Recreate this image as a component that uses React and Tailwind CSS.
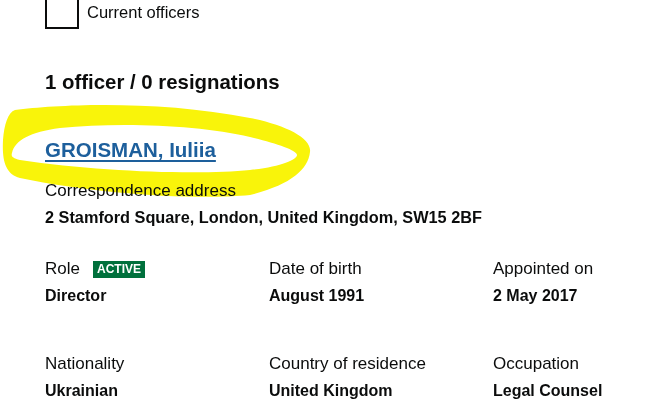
import React from 'react';

const Field = ({ label, value, badge }) => (
  <div>
    <div className="flex items-center gap-[13px] text-[17px] leading-[20px] text-[#0b0c0c]">
      <span>{label}</span>
      {badge && (
        <span className="bg-[#00703c] px-[4px] text-[12px] leading-[17px] font-bold text-white">
          {badge}
        </span>
      )}
    </div>
    <div className="mt-[7px] text-[16px] leading-[20px] font-bold text-[#0b0c0c]">{value}</div>
  </div>
);

const Scribble = () => (
  <svg
    className="pointer-events-none absolute left-0 top-0 mix-blend-multiply"
    width="330"
    height="210"
    viewBox="0 0 330 210"
  >
    <path
      fillRule="evenodd"
      fill="#f9f40a"
      d="M15,110 C60,104 160,100 250,118 C285,125 312,138 310,152 C308,170 290,185 250,195 C200,200 100,195 20,178 C5,174 2,160 3,140 C4,125 8,112 15,110 Z
         M12,153 C15,140 30,132 60,128 C120,122 200,125 250,137 C275,143 297,150 297,155 C297,160 280,167 250,170 C200,175 100,172 20,160 C12,158 11,156 12,153 Z"
    />
  </svg>
);

export default function App() {
  return (
    <div
      className="relative h-[400px] w-[670px] overflow-hidden bg-white pl-[45px] text-[#0b0c0c]"
      style={{ fontFamily: '"Liberation Sans", Arial, sans-serif' }}
    >
      {/* checkbox filter */}
      <div className="-mt-[5px] flex items-start gap-[8px]">
        <div className="h-[34px] w-[34px] border-2 border-[#0b0c0c]" />
        <span className="mt-[7px] text-[16.5px] leading-[20px]">Current officers</span>
      </div>

      <h2 className="mt-[41px] text-[20.4px] leading-[24px] font-bold">1 officer / 0 resignations</h2>

      <Scribble />

      <a
        href="#"
        className="relative mt-[44px] block w-fit text-[20.5px] leading-[24px] font-bold text-[#1d5f9c] underline decoration-[1.5px] underline-offset-[3px]"
      >
        GROISMAN, Iuliia
      </a>

      <div className="relative mt-[19px] text-[17px] leading-[20px]">Correspondence address</div>
      <div className="relative mt-[6px] text-[16.3px] leading-[20px] font-bold">
        2 Stamford Square, London, United Kingdom, SW15 2BF
      </div>

      <div className="mt-[32px] grid grid-cols-[224px_224px_1fr] gap-y-[48px]">
        <Field label="Role" value="Director" badge="ACTIVE" />
        <Field label="Date of birth" value="August 1991" />
        <Field label="Appointed on" value="2 May 2017" />
        <Field label="Nationality" value="Ukrainian" />
        <Field label="Country of residence" value="United Kingdom" />
        <Field label="Occupation" value="Legal Counsel" />
      </div>
    </div>
  );
}
